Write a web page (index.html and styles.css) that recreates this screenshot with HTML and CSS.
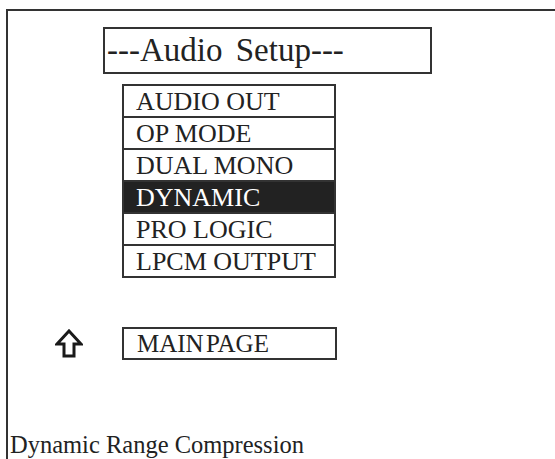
FILE: index.html
```html
<!DOCTYPE html>
<html>
<head>
    <title>Audio Setup</title>
    <link rel="stylesheet" href="styles.css">
</head>
<body>
    <div class="frame">
        <div class="title">---Audio Setup---</div>
        <ul class="menu">
            <li>AUDIO OUT</li>
            <li>OP MODE</li>
            <li>DUAL MONO</li>
            <li class="on">DYNAMIC</li>
            <li>PRO LOGIC</li>
            <li>LPCM OUTPUT</li>
        </ul>
        <div class="main">
            <svg class="arrow" width="28" height="29" viewBox="0 0 28 29">
                <path d="M14 2 L26 15 L19 15 L19 27 L9 27 L9 15 L2 15 Z" fill="none" stroke="#1a1a1a" stroke-width="3" stroke-linejoin="miter"/>
            </svg>
            <div class="mainbox">MAIN PAGE</div>
        </div>
        <p class="hint">Dynamic Range Compression</p>
    </div>
</body>
</html>
```

FILE: styles.css
```css
*{margin: 0; padding: 0;}
body{background: #fff; color: #222; font-family: "Liberation Serif", "Times New Roman", serif;}

.frame{margin: 9px 0 0 6px; height: 450px; box-sizing: border-box;
    border-top: 2px solid #333; border-left: 2px solid #333;
    display: flex; flex-direction: column; align-items: flex-start;}

.title{margin: 16px 0 0 95px; width: 329px; height: 47px; box-sizing: border-box;
    border: 2px solid #333; font-size: 33px; line-height: 43px; padding-left: 2px; word-spacing: 5px;}

.menu{list-style: none; margin: 10px 0 0 114px; width: 214px; box-sizing: border-box;
    border: 2px solid #333; border-bottom: none;}
.menu li{height: 32px; box-sizing: border-box; border-bottom: 2px solid #333;
    font-size: 26px; line-height: 32px; padding-left: 12px; white-space: nowrap;}
.menu li.on{background: #222; color: #fff;}

.main{display: flex; align-items: center; margin: 49px 0 0 47px; gap: 39px;}
.mainbox{width: 215px; height: 33px; box-sizing: border-box; border: 2px solid #333;
    font-size: 25px; line-height: 30px; padding-left: 13px; word-spacing: -4px;}

.hint{margin-top: auto; padding-left: 2px; font-size: 24.5px; line-height: 26px; margin-bottom: 1px;}
```
